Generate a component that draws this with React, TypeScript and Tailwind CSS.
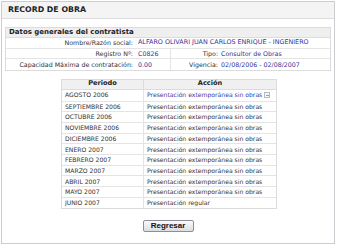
const rows = [
  ['AGOSTO 2006', 'Presentación extemporánea sin obras'],
  ['SEPTIEMBRE 2006', 'Presentación extemporánea sin obras'],
  ['OCTUBRE 2006', 'Presentación extemporánea sin obras'],
  ['NOVIEMBRE 2006', 'Presentación extemporánea sin obras'],
  ['DICIEMBRE 2006', 'Presentación extemporánea sin obras'],
  ['ENERO 2007', 'Presentación extemporánea sin obras'],
  ['FEBRERO 2007', 'Presentación extemporánea sin obras'],
  ['MARZO 2007', 'Presentación extemporánea sin obras'],
  ['ABRIL 2007', 'Presentación extemporánea sin obras'],
  ['MAYO 2007', 'Presentación extemporánea sin obras'],
  ['JUNIO 2007', 'Presentación regular'],
]

export default function App() {
  return (
    <div className="w-[338px] h-[248px] bg-white pt-[1px] pl-[1px] font-['DejaVu_Sans',sans-serif] text-[6.3px] text-[#333] whitespace-nowrap">
      <div className="w-[334px] h-[243px] border border-[#c9cdd2] flex flex-col">
        {/* header */}
        <div className="h-[17px] bg-[#f4f4f4] border-b border-[#dcdcdc] flex items-center pl-[6px] font-bold text-[7.8px] text-[#222]">
          RECORD DE OBRA
        </div>

        {/* datos generales */}
        <div className="mx-[3px] mt-[8px] border border-[#dcdcdc]">
          <div className="h-[10px] bg-[#efefef] border-b border-[#dcdcdc] flex items-center pl-[3px] font-bold text-[7px] text-[#222]">
            Datos generales del contratista
          </div>
          <div className="flex h-[10.5px] items-center border-b border-[#e4e4e4]">
            <div className="w-[129px] text-right pr-[2px]">Nombre/Razón social:</div>
            <div className="pl-[3px] text-[#333399] text-[6.4px]">ALFARO OLIVARI JUAN CARLOS ENRIQUE - INGENIERO</div>
          </div>
          <div className="flex h-[10.5px] items-center border-b border-[#e4e4e4]">
            <div className="w-[129px] text-right pr-[2px]">Registro Nº:</div>
            <div className="w-[36px] h-full flex items-center pl-[3px] text-[#333399] border-r border-[#e4e4e4]">C0826</div>
            <div className="w-[49px] text-right pr-[2px]">Tipo:</div>
            <div className="pl-[1px] text-[#333399]">Consultor de Obras</div>
          </div>
          <div className="flex h-[10.5px] items-center">
            <div className="w-[129px] text-right pr-[2px]">Capacidad Máxima de contratación:</div>
            <div className="w-[36px] h-full flex items-center pl-[3px] text-[#333399] border-r border-[#e4e4e4]">0.00</div>
            <div className="w-[49px] text-right pr-[2px]">Vigencia:</div>
            <div className="pl-[1px] text-[#333399]">02/08/2006 - 02/08/2007</div>
          </div>
        </div>

        {/* tabla */}
        <div className="mt-[8px] ml-[59px] w-[216px] border border-[#dcdcdc] text-[6.1px]">
          <div className="flex h-[10px] bg-[#f0f0f0] border-b border-[#dcdcdc] font-bold text-[6.6px] text-[#222]">
            <div className="w-[82px] flex items-center justify-center border-r border-[#dcdcdc]">Periodo</div>
            <div className="flex-1 flex items-center justify-center">Acción</div>
          </div>
          {rows.map(([p, a], i) => (
            <div
              key={i}
              className={`flex ${i === 0 ? 'h-[12px]' : 'h-[10.7px]'} ${i < rows.length - 1 ? 'border-b border-[#e4e4e4]' : ''}`}
            >
              <div className="w-[82px] shrink-0 flex items-center pl-[3px] border-r border-[#e4e4e4]">{p}</div>
              <div className={`flex-1 flex items-center pl-[3px] ${i === 0 ? 'text-[#3a3aa0]' : ''}`}>
                <span>{a}</span>
                {i === 0 && (
                  <span className="ml-[2px] shrink-0 w-[6px] h-[6px] border border-[#b8b8c8] bg-[#f6f6fa] flex items-center justify-center">
                    <span className="w-[3px] h-[1px] bg-[#9a9ab0]" />
                  </span>
                )}
              </div>
            </div>
          ))}
        </div>

        {/* boton */}
        <div className="flex justify-center mt-[11px]">
          <button className="w-[51px] h-[12px] border border-[#8a8f99] rounded-[2px] bg-gradient-to-b from-[#fbfbfb] to-[#dadde2] font-['Liberation_Sans',sans-serif] font-bold text-[8px] text-[#111] leading-none">
            Regresar
          </button>
        </div>
      </div>
    </div>
  )
}
